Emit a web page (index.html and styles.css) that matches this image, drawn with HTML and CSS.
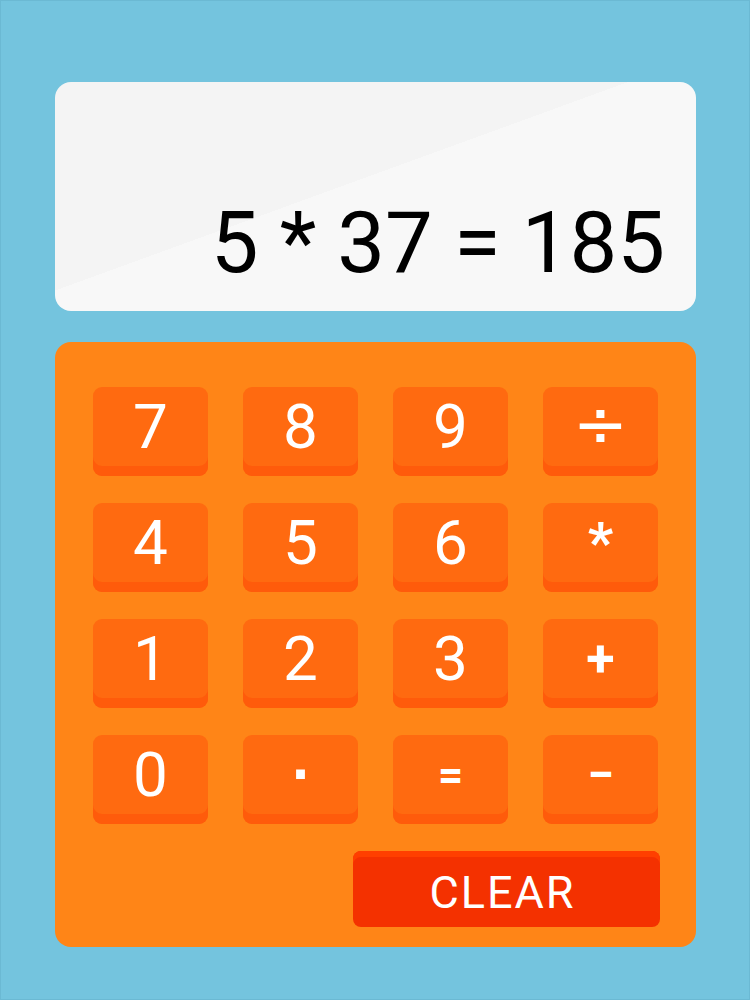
FILE: index.html
```html
<!DOCTYPE html>
<html>
<head>
<meta charset="utf-8">
<link rel="stylesheet" href="styles.css">
</head>
<body>
<div class="page">
  <div class="display">
    <div class="readout">5 * 37 = 185</div>
  </div>
  <div class="keypad">
    <div class="keys">
      <button class="key">7</button>
      <button class="key">8</button>
      <button class="key">9</button>
      <button class="key op-div">÷</button>
      <button class="key">4</button>
      <button class="key">5</button>
      <button class="key">6</button>
      <button class="key op op-mul">*</button>
      <button class="key">1</button>
      <button class="key">2</button>
      <button class="key">3</button>
      <button class="key op op-add">+</button>
      <button class="key">0</button>
      <button class="key op-dot">·</button>
      <button class="key op-eq">=</button>
      <button class="key op op-sub">−</button>
    </div>
    <div class="clear-row">
      <button class="clear">CLEAR</button>
    </div>
  </div>
</div>
</body>
</html>
```

FILE: styles.css
```css
html, body {
  margin: 0;
  padding: 0;
}
body {
  font-family: Roboto, "Liberation Sans", sans-serif;
}
.page {
  box-sizing: border-box;
  width: 750px;
  height: 1000px;
  background: #74c4de;
  border: 1px solid #6bb9d3;
  padding: 81px 53px 0 54px;
}
.display {
  height: 229px;
  border-radius: 16px;
  background: linear-gradient(160deg, #f4f4f4 196px, #f8f8f8 196px);
  display: flex;
  align-items: flex-end;
  justify-content: flex-end;
  padding: 0 31px 25px 0;
  box-sizing: border-box;
}
.readout {
  font-size: 85px;
  line-height: 1;
  color: #000;
  white-space: pre;
}
.keypad {
  margin-top: 31px;
  height: 605px;
  border-radius: 16px;
  background: #ff8517;
  box-sizing: border-box;
  padding: 45px 39px 0 38px;
}
.keys {
  display: grid;
  grid-template-columns: repeat(4, 115px);
  grid-auto-rows: 89px;
  column-gap: 35px;
  row-gap: 27px;
}
.key {
  border: 0;
  margin: 0;
  padding: 0 0 10px 0;
  border-radius: 9px;
  background: #ff6a10;
  box-shadow: inset 0 -10px 0 #ff5b0b;
  color: #fff;
  font-family: Roboto, "Liberation Sans", sans-serif;
  font-size: 62px;
  line-height: 1;
  display: flex;
  align-items: center;
  justify-content: center;
}
.op {
  font-weight: 700;
}
.op-div {
  font-family: "DejaVu Sans", sans-serif;
  font-size: 66px;
  padding-bottom: 14px;
}
.op-mul {
  font-size: 56px;
}
.op-add {
  font-size: 52px;
}
.op-sub {
  font-size: 48px;
}
.op-dot {
  font-family: "DejaVu Sans", sans-serif;
  font-size: 50px;
  font-weight: 700;
}
.op-eq {
  font-size: 44px;
  font-weight: 700;
}
.clear-row {
  display: flex;
  justify-content: flex-end;
  padding: 27px 2px 0 0;
  margin-right: -5px;
}
.clear {
  width: 307px;
  height: 76px;
  border: 0;
  margin: 0;
  padding: 6px 8px 0 0;
  border-radius: 8px;
  background: #f43100;
  box-shadow: inset 0 6px 0 #ff3f00;
  color: #fff;
  font-family: Roboto, "Liberation Sans", sans-serif;
  font-size: 45px;
  letter-spacing: 2px;
  line-height: 1;
}
```
